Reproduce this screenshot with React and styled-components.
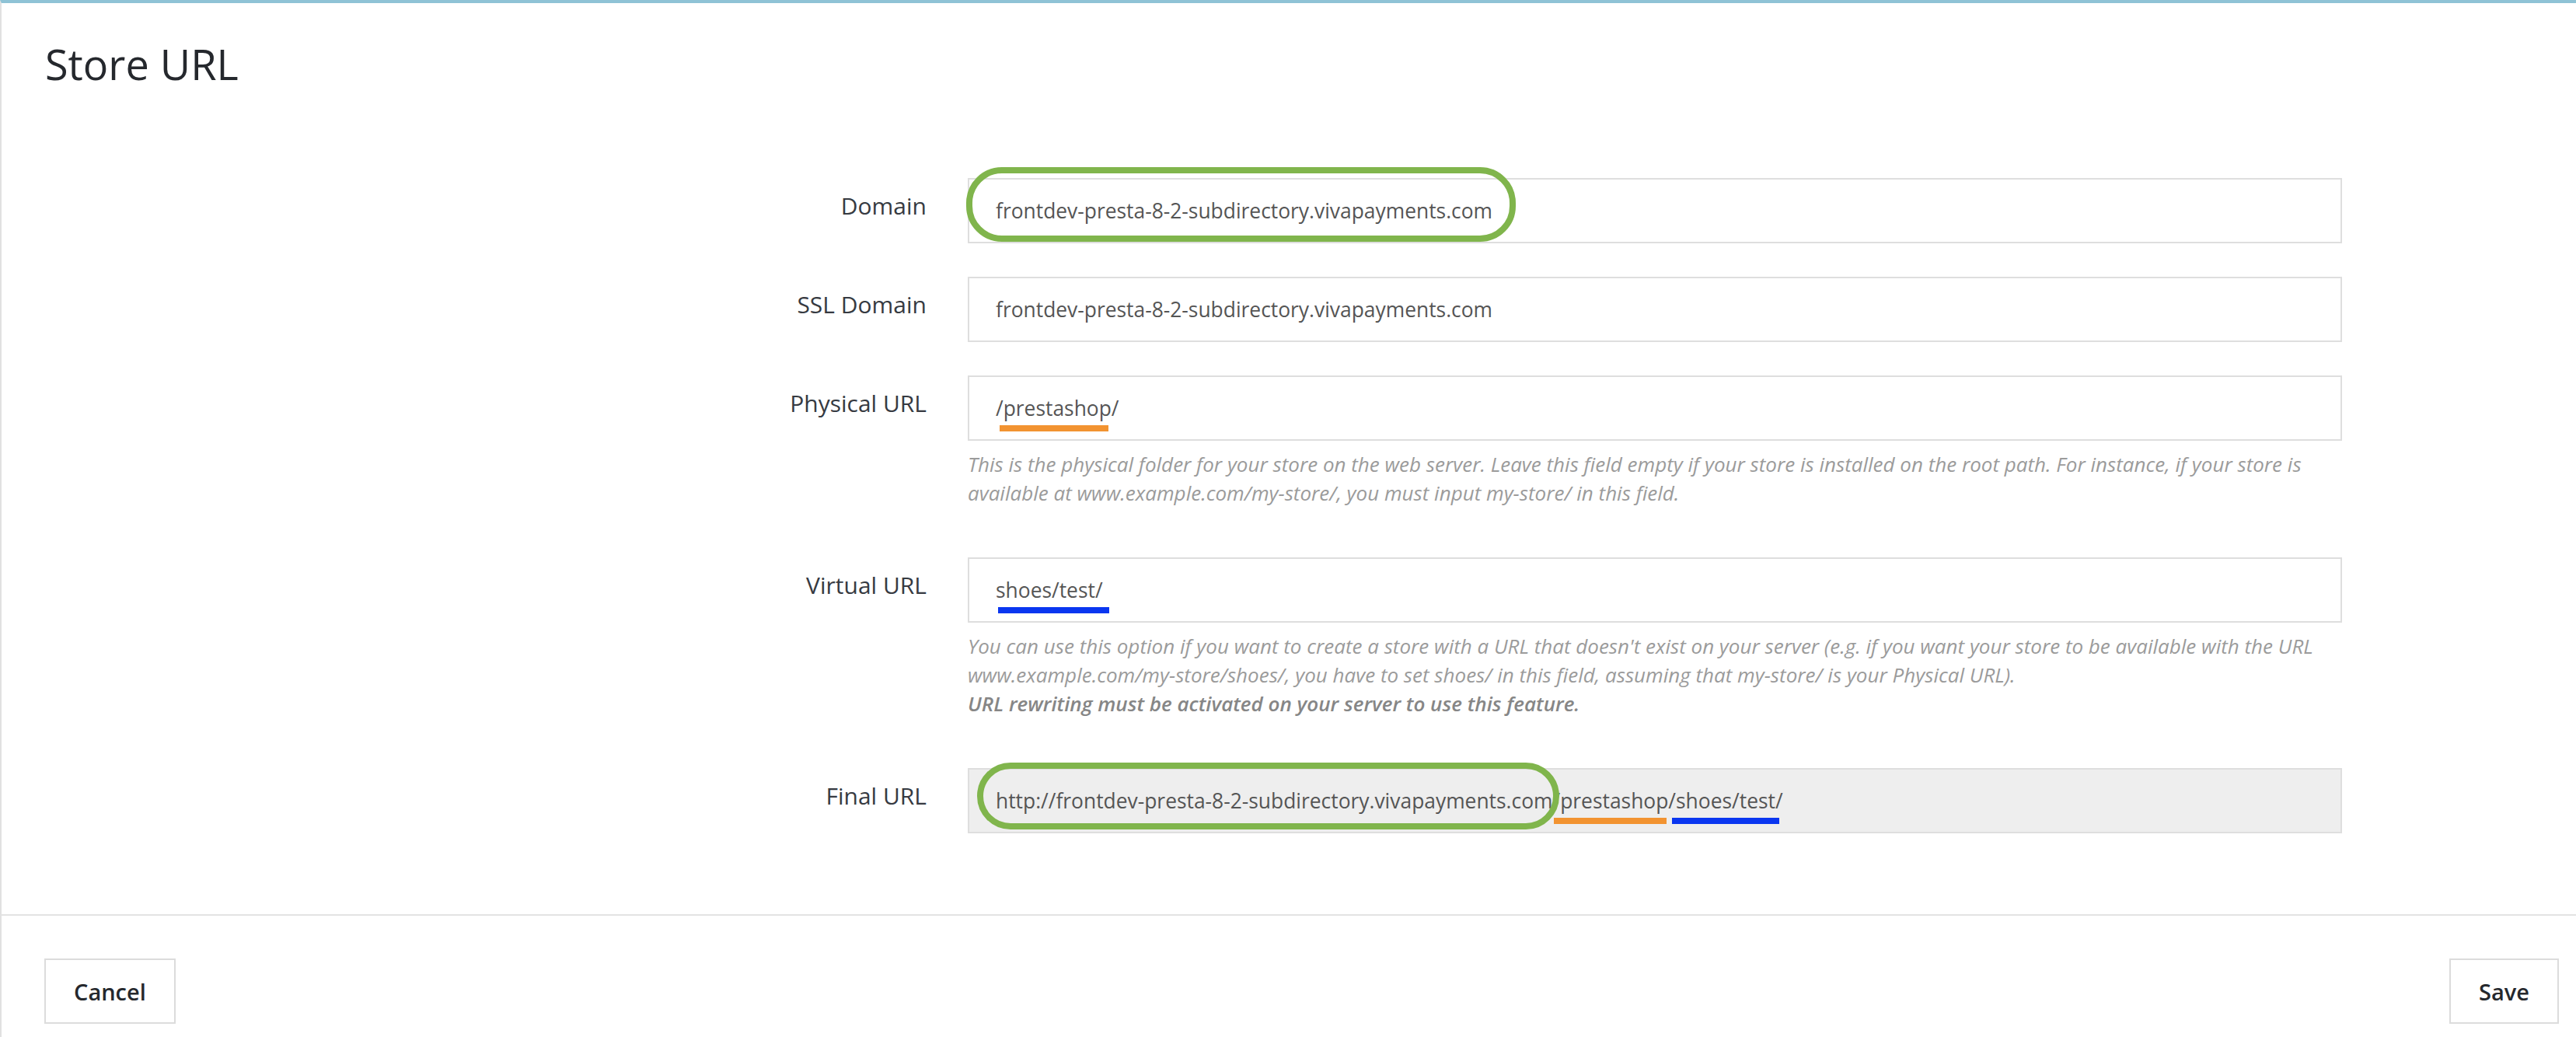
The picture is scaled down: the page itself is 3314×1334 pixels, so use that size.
import styled, { createGlobalStyle } from "styled-components";

const GlobalStyle = createGlobalStyle`
  html, body {
    margin: 0;
    padding: 0;
    background: #fff;
  }
  body {
    font-family: "Open Sans", "Liberation Sans", sans-serif;
    color: #363a41;
  }
`

const Panel = styled.div`
  box-sizing: border-box;
  min-height: 100vh;
  border-top: 4px solid #8fc3d6;
  border-left: 2px solid #e1e1e1;
  background: #fff;
  overflow: hidden;
`

const Heading = styled.h2`
  margin: 0;
  padding: 41px 0 0 56px;
  font-size: 54px;
  font-weight: 400;
  line-height: normal;
  color: #25282d;
`

const Form = styled.div`
  padding: 110px 0 104px;
`

const FieldRow = styled.div`
  display: grid;
  grid-template-columns: 1190px 1768px;
  column-gap: 53px;
  margin-bottom: ${props => (props.last ? "0" : props.help ? "64px" : "43px")};
`

const Label = styled.label`
  padding-top: 16px;
  text-align: right;
  font-size: 30px;
  line-height: 40px;
  color: #363a41;
`

const Input = styled.div`
  box-sizing: border-box;
  display: flex;
  align-items: center;
  height: 84px;
  padding: 0 34px;
  border: 2px solid #dedede;
  background: ${props => (props.readOnly ? "#eeeeee" : "#fff")};
  font-size: 26.4px;
  color: #555;
  white-space: nowrap;
`

const Help = styled.p`
  margin: 12px 0 0;
  font-size: 26px;
  font-style: italic;
  line-height: 37px;
  color: #9b9b9b;
  white-space: nowrap;

  strong {
    font-weight: 600;
    color: #868686;
  }
`

// hand-drawn green highlight around a piece of text
const Ring = styled.span`
  position: relative;

  &::before {
    content: "";
    position: absolute;
    left: ${props => props.l}px;
    right: ${props => props.r}px;
    top: ${props => props.t}px;
    bottom: ${props => props.b}px;
    border: 8px solid #80b54c;
    border-radius: 46px;
    pointer-events: none;
  }
`

// coloured bar drawn under a piece of text
const Mark = styled.span`
  position: relative;

  &::after {
    content: "";
    position: absolute;
    left: ${props => props.l || 0}px;
    right: ${props => props.r || 0}px;
    bottom: -12px;
    height: 8px;
    background: ${props => (props.tone === "blue" ? "#0a36f0" : "#f29331")};
  }
`

const Footer = styled.div`
  display: flex;
  justify-content: space-between;
  align-items: center;
  padding: 55px 22px 18px 55px;
  border-top: 2px solid #e3e3e3;
`

const Button = styled.button`
  box-sizing: border-box;
  height: 84px;
  padding: 0 36px;
  border: 2px solid #dcdcdc;
  background: #fff;
  font-family: "Open Sans", "Liberation Sans", sans-serif;
  font-size: 29px;
  font-weight: 600;
  color: #25282d;
`

const App = () => {
  return (
    <>
      <GlobalStyle />
      <Panel>
        <Heading>Store URL</Heading>
        <Form>
          <FieldRow>
            <Label>Domain</Label>
            <Input>
              <Ring l={-38} r={-30} t={-38} b={-22}>frontdev-presta-8-2-subdirectory.vivapayments.com</Ring>
            </Input>
          </FieldRow>
          <FieldRow>
            <Label>SSL Domain</Label>
            <Input>frontdev-presta-8-2-subdirectory.vivapayments.com</Input>
          </FieldRow>
          <FieldRow help>
            <Label>Physical URL</Label>
            <div>
              <Input>
                <Mark l={5} r={14}>/prestashop/</Mark>
              </Input>
              <Help>
                This is the physical folder for your store on the web server. Leave this field empty if your store is installed on the root path. For instance, if your store is
                <br />
                available at www.example.com/my-store/, you must input my-store/ in this field.
              </Help>
            </div>
          </FieldRow>
          <FieldRow help>
            <Label>Virtual URL</Label>
            <div>
              <Input>
                <Mark tone="blue" l={3} r={-8}>shoes/test/</Mark>
              </Input>
              <Help>
                You can use this option if you want to create a store with a URL that doesn't exist on your server (e.g. if you want your store to be available with the URL
                <br />
                www.example.com/my-store/shoes/, you have to set shoes/ in this field, assuming that my-store/ is your Physical URL).
                <br />
                <strong>URL rewriting must be activated on your server to use this feature.</strong>
              </Help>
            </div>
          </FieldRow>
          <FieldRow last>
            <Label>Final URL</Label>
            <Input readOnly>
              <Ring l={-24} r={-9} t={-31} b={-19}>http://frontdev-presta-8-2-subdirectory.vivapayments.com</Ring>
              /<Mark l={-8} r={12}>prestashop/</Mark><Mark tone="blue" l={-5} r={5}>shoes/test/</Mark>
            </Input>
          </FieldRow>
        </Form>
        <Footer>
          <Button>Cancel</Button>
          <Button>Save</Button>
        </Footer>
      </Panel>
    </>
  )
}

export default App
